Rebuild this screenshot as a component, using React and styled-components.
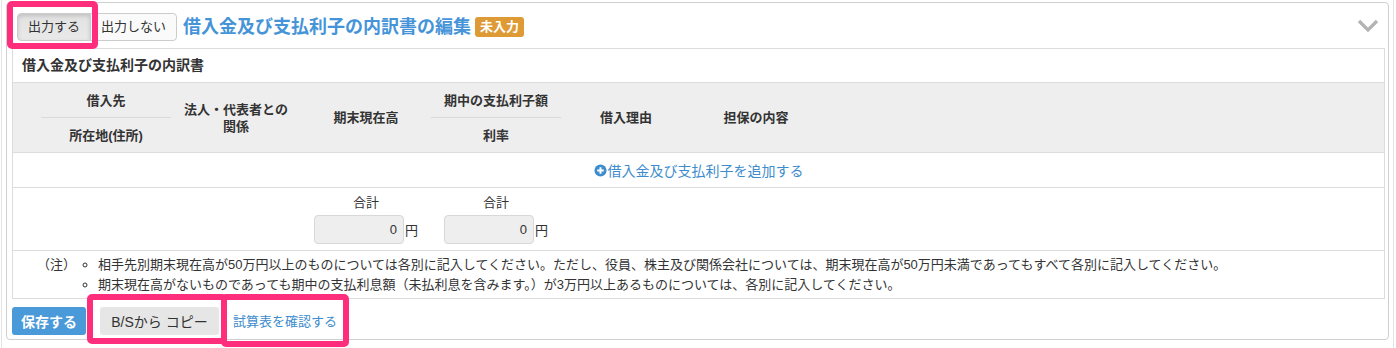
import React from 'react';
import styled, { createGlobalStyle } from 'styled-components';

const GlobalStyle = createGlobalStyle`
  html, body {
    margin: 0;
    padding: 0;
    background: #fff;
  }
  body {
    font-family: "Liberation Sans", "Noto Sans CJK JP", sans-serif;
    font-size: 13px;
    color: #333;
  }
`;

const Page = styled.div`
  position: relative;
  width: 1394px;
  height: 348px;
  overflow: hidden;
`;

const Frame = styled.div`
  margin-left: 1px;
  width: 1383px;
  padding: 2px 4px 0 4px;
  border-left: 1px solid #e4e4e4;
  border-right: 1px solid #e4e4e4;
  height: 346px;
`;

const Panel = styled.section`
  border: 1px solid #cfcfcf;
  border-radius: 4px;
  padding: 10px 3px 4px 5px;
`;

const Header = styled.div`
  display: flex;
  align-items: center;
  height: 28px;
  padding-left: 5px;
  padding-right: 6px;
`;

const ToggleGroup = styled.div`
  display: flex;
`;

const Toggle = styled.button`
  height: 28px;
  padding: 0 10px;
  font-family: inherit;
  font-size: 13px;
  color: #333;
  border: 1px solid #ccc;
  background: ${p => (p.$active ? 'linear-gradient(#e2e2e2, #e9e9e9)' : '#fafafa')};
  box-shadow: ${p => (p.$active ? 'inset 0 2px 4px rgba(0,0,0,0.15)' : 'none')};
  border-radius: ${p => (p.$first ? '4px 0 0 4px' : '0 4px 4px 0')};
  margin-left: ${p => (p.$first ? '0' : '-1px')};
  line-height: 26px;
`;

const Title = styled.h2`
  margin: 0 0 0 6px;
  font-size: 18px;
  font-weight: bold;
  color: #4694d8;
  line-height: 24px;
`;

const Badge = styled.span`
  margin-left: 4px;
  background: #de9b35;
  color: #fff;
  font-size: 13px;
  font-weight: bold;
  line-height: 20px;
  padding: 0 5px;
  border-radius: 3px;
`;

const Chevron = styled.svg`
  margin-left: auto;
  margin-top: -3px;
`;

const Box = styled.div`
  margin-top: 7px;
  border: 1px solid #dcdcdc;
`;

const BoxTitle = styled.div`
  height: 33px;
  line-height: 33px;
  padding-left: 9px;
  font-size: 14px;
  font-weight: bold;
`;

const Table = styled.table`
  width: 100%;
  table-layout: fixed;
  border-collapse: collapse;
`;

const HeadCell = styled.th`
  background: #eee;
  height: 34px;
  padding: 0;
  font-size: 13px;
  font-weight: bold;
  text-align: center;
  vertical-align: middle;
  line-height: 17px;
  border-bottom: ${p => (p.$split ? '1px solid #dadada' : 'none')};
`;

const HeadRow = styled.tr`
  &:first-child th {
    border-top: 1px solid #dcdcdc;
  }
`;

const AddCell = styled.td`
  height: 34px;
  border-top: 1px solid #dcdcdc;
  text-align: center;
  padding: 0;
`;

const AddLink = styled.a`
  display: inline-flex;
  align-items: center;
  gap: 1px;
  color: #3d8ccd;
  font-size: 14px;
  text-decoration: none;
`;

const TotalCell = styled.td`
  height: 62px;
  border-top: 1px solid #dcdcdc;
  padding: 0;
  text-align: center;
  vertical-align: middle;
`;

const TotalLabel = styled.div`
  font-size: 13px;
  line-height: 16px;
  margin-bottom: 4px;
`;

const TotalField = styled.div`
  display: inline-flex;
  align-items: center;
  gap: 1px;
`;

const Amount = styled.div`
  width: 82px;
  height: 27px;
  padding-right: 6px;
  background: #eee;
  border: 1px solid #d8d8d8;
  border-radius: 4px;
  text-align: right;
  line-height: 27px;
  font-size: 13px;
  color: #333;
`;

const Notes = styled.div`
  display: flex;
  border-top: 1px solid #dcdcdc;
  padding: 4px 0 3px 24px;
  font-size: 13px;
  line-height: 20px;
`;

const NoteLabel = styled.span`
  width: 48px;
`;

const NoteList = styled.ul`
  margin: 0;
  padding: 0 0 0 13px;
  list-style: circle;
`;

const Footer = styled.div`
  display: flex;
  align-items: center;
  margin-top: 7px;
  height: 29px;
`;

const SaveButton = styled.button`
  height: 28px;
  padding: 0 9px;
  border: none;
  border-radius: 3px;
  background: #4a9ad9;
  color: #fff;
  font-family: inherit;
  font-size: 14px;
  font-weight: bold;
`;

const GrayButton = styled.button`
  margin-left: 14px;
  height: 28px;
  width: 119px;
  border: none;
  border-radius: 3px;
  background: #e6e6e6;
  color: #333;
  font-family: inherit;
  font-size: 14px;
`;

const TextLink = styled.a`
  margin-left: 14px;
  color: #3d8ccd;
  font-size: 13px;
  text-decoration: none;
`;

const Highlight = styled.div`
  position: absolute;
  left: ${p => p.$x}px;
  top: ${p => p.$y}px;
  width: ${p => p.$w}px;
  height: ${p => p.$h}px;
  box-sizing: border-box;
  border: 6px solid #ff2e7c;
  border-radius: 5px;
  pointer-events: none;
`;

const PlusCircle = () => (
  <svg width="13" height="13" viewBox="0 0 14 14">
    <circle cx="7" cy="7" r="6.5" fill="#3d8ccd" />
    <path d="M7 3.5v7M3.5 7h7" stroke="#fff" strokeWidth="2.2" />
  </svg>
);

const notes = [
  '相手先別期末現在高が50万円以上のものについては各別に記入してください。ただし、役員、株主及び関係会社については、期末現在高が50万円未満であってもすべて各別に記入してください。',
  '期末現在高がないものであっても期中の支払利息額（未払利息を含みます。）が3万円以上あるものについては、各別に記入してください。',
];

export default function App() {
  return (
    <Page>
      <GlobalStyle />
      <Frame>
        <Panel>
          <Header>
            <ToggleGroup>
              <Toggle $first $active>出力する</Toggle>
              <Toggle>出力しない</Toggle>
            </ToggleGroup>
            <Title>借入金及び支払利子の内訳書の編集</Title>
            <Badge>未入力</Badge>
            <Chevron width="22" height="14" viewBox="0 0 22 14">
              <polyline points="2,2 11,11 20,2" fill="none" stroke="#b3b3b3" strokeWidth="3.2" />
            </Chevron>
          </Header>

          <Box>
            <BoxTitle>借入金及び支払利子の内訳書</BoxTitle>
            <Table>
              <colgroup>
                <col style={{ width: 28 }} />
                <col style={{ width: 130 }} />
                <col style={{ width: 130 }} />
                <col style={{ width: 130 }} />
                <col style={{ width: 130 }} />
                <col style={{ width: 130 }} />
                <col style={{ width: 130 }} />
                <col />
              </colgroup>
              <thead>
                <HeadRow>
                  <HeadCell rowSpan={2} />
                  <HeadCell $split>借入先</HeadCell>
                  <HeadCell rowSpan={2}>法人・代表者との<br />関係</HeadCell>
                  <HeadCell rowSpan={2}>期末現在高</HeadCell>
                  <HeadCell $split>期中の支払利子額</HeadCell>
                  <HeadCell rowSpan={2}>借入理由</HeadCell>
                  <HeadCell rowSpan={2}>担保の内容</HeadCell>
                  <HeadCell rowSpan={2} />
                </HeadRow>
                <HeadRow>
                  <HeadCell>所在地(住所)</HeadCell>
                  <HeadCell>利率</HeadCell>
                </HeadRow>
              </thead>
              <tbody>
                <tr>
                  <AddCell colSpan={8}>
                    <AddLink href="#"><PlusCircle />借入金及び支払利子を追加する</AddLink>
                  </AddCell>
                </tr>
                <tr>
                  <TotalCell colSpan={3} />
                  <TotalCell>
                    <TotalLabel>合計</TotalLabel>
                    <TotalField><Amount>0</Amount>円</TotalField>
                  </TotalCell>
                  <TotalCell>
                    <TotalLabel>合計</TotalLabel>
                    <TotalField><Amount>0</Amount>円</TotalField>
                  </TotalCell>
                  <TotalCell colSpan={3} />
                </tr>
              </tbody>
            </Table>
            <Notes>
              <NoteLabel>（注）</NoteLabel>
              <NoteList>
                {notes.map(n => <li key={n}>{n}</li>)}
              </NoteList>
            </Notes>
          </Box>

          <Footer>
            <SaveButton>保存する</SaveButton>
            <GrayButton>B/Sから コピー</GrayButton>
            <TextLink href="#">試算表を確認する</TextLink>
          </Footer>
        </Panel>
      </Frame>
      <Highlight $x={7} $y={1} $w={91} $h={48} />
      <Highlight $x={87} $y={294} $w={140} $h={50} />
      <Highlight $x={221} $y={294} $w={128} $h={53} />
    </Page>
  );
}
